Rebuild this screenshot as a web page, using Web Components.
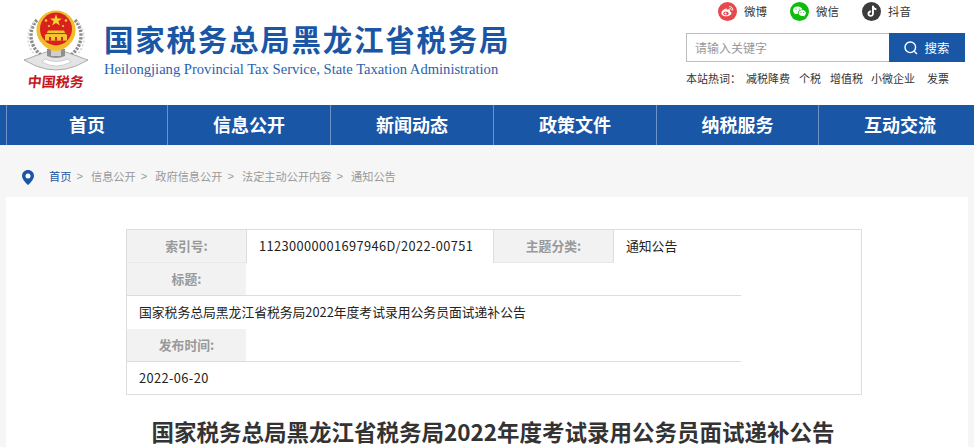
<!DOCTYPE html>
<html lang="zh">
<head>
<meta charset="utf-8">
<title>国家税务总局黑龙江省税务局</title>
<style>
  html, body { margin: 0; background: #f6f6f6; }
  body { font-family: "Noto Sans CJK SC", "Liberation Sans", sans-serif; height: 447px; overflow: hidden; }
</style>
</head>
<body>
<site-header></site-header>
<main-nav></main-nav>
<bread-crumb></bread-crumb>
<article-panel>
  <info-table>
    <span slot="index" style="letter-spacing:.4px">11230000001697946D/2022-00751</span>
    <span slot="topic">通知公告</span>
    <span slot="title">国家税务总局黑龙江省税务局2022年度考试录用公务员面试递补公告</span>
    <span slot="date" style="letter-spacing:.4px">2022-06-20</span>
  </info-table>
  <h1 slot="heading">国家税务总局黑龙江省税务局2022年度考试录用公务员面试递补公告</h1>
</article-panel>

<script>
const FONT = '"Noto Sans CJK SC", "Liberation Sans", sans-serif'

class TaxLogo extends HTMLElement {
  constructor() {
    super()
    this.attachShadow({ mode: 'open' }).innerHTML = `
    <style>
      :host { display: block; width: 64px; }
      svg { display: block; }
      .seal {
        display: block; height: 20px; margin-top: -2px; white-space: nowrap;
        color: #c4161c; font: bold 14px/20px ${FONT};
        text-align: center; transform: skewX(-6deg);
      }
    </style>
    <svg width="64" height="65" viewBox="0 0 64 65">
      <!-- wreath -->
      <g fill="none" stroke="#8c8c8c" stroke-width="3.4" stroke-dasharray="2.4 1.3">
        <path d="M13 12 C4 22 5 38 17 47"/>
        <path d="M51 12 C60 22 59 38 47 47"/>
      </g>
      <g fill="none" stroke="#d4d4d4" stroke-width="1.6" stroke-dasharray="2 2">
        <path d="M10 14 C1 24 2 40 14 50"/>
        <path d="M54 14 C63 24 62 40 50 50"/>
      </g>
      <!-- ribbon -->
      <path d="M0 52 L22 44 L42 44 L64 52 L52 58 Q32 66 12 58 Z" fill="#e4e4e4" stroke="#9a9a9a" stroke-width=".8"/>
      <path d="M18 54 Q32 62 47 54 L44 51 Q32 56 21 51 Z" fill="#fff" stroke="#aaa" stroke-width=".5"/>
      <path d="M23 41 h18 v7 q-9 4 -18 0 Z" fill="#8f8f8f"/>
      <rect x="27" y="39" width="10" height="9" fill="#cfcfcf"/>
      <!-- emblem -->
      <circle cx="32" cy="22" r="19.6" fill="#f1bd2c"/>
      <ellipse cx="32" cy="21" rx="16" ry="16.4" fill="#d9221f"/>
      <path d="M32 6.2 l1.5 4.3 h4.5 l-3.6 2.7 1.4 4.4 -3.8 -2.7 -3.8 2.7 1.4 -4.4 -3.6 -2.7 h4.5 Z" fill="#f7d22f"/>
      <g fill="#f7d22f"><circle cx="22" cy="12.5" r="1.3"/><circle cx="42" cy="12.5" r="1.3"/><circle cx="25" cy="18" r="1.1"/><circle cx="39" cy="18" r="1.1"/></g>
      <path d="M22 26 h20 l1.5 2 h-23 Z M24 22.5 h16 l1.2 2.4 h-18.4 Z" fill="#f3c52e"/>
      <rect x="21" y="28" width="22" height="4.6" fill="#f3c52e"/>
      <g fill="#d9221f"><rect x="25" y="29" width="2" height="3.6"/><rect x="31" y="29" width="2" height="3.6"/><rect x="37" y="29" width="2" height="3.6"/></g>
      <path d="M16 30 Q23 41 32 41.5 Q41 41 48 30 L45 37 Q38 43 32 43 Q26 43 19 37 Z" fill="#f1bd2c"/>
    </svg>
    <span class="seal">中国税务</span>`
  }
}

class SocialLink extends HTMLElement {
  constructor() {
    super()
    this.attachShadow({ mode: 'open' }).innerHTML = `
    <style>
      :host { display: flex; align-items: center; gap: 7px; font-size: 11.5px; line-height: 19px; color: #333; }
      ::slotted(svg) { display: block; }
    </style>
    <slot name="icon"></slot><slot></slot>`
  }
}

class SearchBox extends HTMLElement {
  constructor() {
    super()
    this.attachShadow({ mode: 'open' }).innerHTML = `
    <style>
      :host { display: flex; height: 29px; width: 279px; font-size: 12px; line-height: 27px; }
      .field { flex: 1; border: 1px solid #bdbdbd; border-right: 0; padding-left: 8px; color: #999; }
      .btn { width: 76px; background: #1a56a6; color: #fff; font-size: 12.5px; display: flex; align-items: center; justify-content: center; gap: 6px; box-sizing: border-box; }
      svg { display: block; }
    </style>
    <div class="field">请输入关键字</div>
    <div class="btn">
      <svg width="14" height="14" viewBox="0 0 14 14" fill="none" stroke="#fff" stroke-width="1.4"><circle cx="6.3" cy="6.3" r="5.3"/><path d="M10.2 10.2 L13 13"/></svg>
      <span>搜索</span>
    </div>`
  }
}

class HotWords extends HTMLElement {
  constructor() {
    super()
    this.attachShadow({ mode: 'open' }).innerHTML = `
    <style>
      :host { display: flex; font-size: 11px; line-height: 16px; color: #333; white-space: nowrap; }
      span { margin-right: 9px; }
      .lead { margin-right: 5px; width: 55px; }
      .tight { margin-right: 8px; }
      .far { margin-left: 3px; }
    </style>
    <span class="lead">本站热词：</span><span>减税降费</span><span>个税</span><span class="tight">增值税</span><span>小微企业</span><span class="far">发票</span>`
  }
}

class SiteHeader extends HTMLElement {
  constructor() {
    super()
    this.attachShadow({ mode: 'open' }).innerHTML = `
    <style>
      :host { display: flex; height: 105px; background: #fff; box-sizing: border-box; padding: 8px 9px 0 24px; overflow: hidden; }
      .brand { margin-left: 16px; color: #1a56a6; }
      .cn { font-size: 29.5px; font-weight: bold; letter-spacing: 1.75px; line-height: 44px; margin-top: 8px; white-space: nowrap; }
      .en { font: 14.6px/18px "Liberation Serif", serif; margin-top: 0; white-space: nowrap; color: #2b62ad; }
      .tools { margin-left: auto; margin-top: -6px; width: 279px; }
      .social { display: flex; padding-left: 32px; gap: 23px; height: 19px; margin-bottom: 12px; }
      hot-words { margin-top: 8px; }
    </style>
    <tax-logo></tax-logo>
    <div class="brand">
      <div class="cn">国家税务总局黑龙江省税务局</div>
      <div class="en">Heilongjiang Provincial Tax Service, State Taxation Administration</div>
    </div>
    <div class="tools">
      <div class="social">
        <social-link>
          <svg slot="icon" width="19" height="19" viewBox="0 0 19 19"><circle cx="9.5" cy="9.5" r="9.5" fill="#e8474c"/><path d="M8 6.6c-2.4.6-4.6 2.600-4.600 4.600 0 1.900 2.300 3.100 4.800 3.100 3 0 5.300-1.600 5.300-3.200 0-1-.9-1.500-1.600-1.700.3-.8.3-1.400-.1-1.800-.7-.6-2-.2-3.100.3.3-1.100.1-1.700-.7-1.300z" fill="#fff"/><ellipse cx="8" cy="11.400" rx="2.700" ry="1.900" fill="#e8474c"/><circle cx="7.600" cy="11.500" r="1" fill="#fff"/><path d="M11.500 4.600c2-.3 3.700 1.400 3.300 3.500M11.800 6.300c1-.2 1.700.6 1.500 1.600" fill="none" stroke="#fff" stroke-width=".9" stroke-linecap="round"/></svg>
          微博
        </social-link>
        <social-link>
          <svg slot="icon" width="19" height="19" viewBox="0 0 19 19"><circle cx="9.5" cy="9.5" r="9.5" fill="#0cbd0a"/><path d="M7.600 4.400c-2.600 0-4.600 1.700-4.600 3.800 0 1.200.7 2.300 1.700 3l-.4 1.400 1.600-.8c.6.2 1.100.3 1.700.3h.4c-.1-.3-.2-.6-.2-1 0-2 1.900-3.600 4.300-3.600h.3c-.4-1.800-2.300-3.100-4.500-3.100z" fill="#fff"/><path d="M16 11c0-1.700-1.700-3.100-3.700-3.100S8.600 9.300 8.600 11s1.700 3.100 3.700 3.100c.4 0 .9-.1 1.300-.2l1.300.7-.3-1.200c.8-.6 1.400-1.500 1.400-2.400z" fill="#fff"/><g fill="#0cbd0a"><circle cx="6" cy="7" r=".6"/><circle cx="9.200" cy="7" r=".6"/><circle cx="11" cy="10.400" r=".5"/><circle cx="13.600" cy="10.400" r=".5"/></g></svg>
          微信
        </social-link>
        <social-link>
          <svg slot="icon" width="19" height="19" viewBox="0 0 19 19"><circle cx="9.5" cy="9.5" r="9.5" fill="#3c3c3c"/><path d="M10 3.800h1.900c.1 1.500 1 2.400 2.500 2.500v1.900c-.9 0-1.800-.3-2.500-.8v4c0 2-1.500 3.300-3.200 3.300S5.500 13.400 5.500 11.700c0-1.900 1.700-3.400 3.600-3.100v2c-.9-.3-1.700.4-1.700 1.200 0 .7.600 1.300 1.300 1.300.8 0 1.300-.6 1.300-1.400z" fill="#fff"/></svg>
          抖音
        </social-link>
      </div>
      <search-box></search-box>
      <hot-words></hot-words>
    </div>`
  }
}

class MainNav extends HTMLElement {
  constructor() {
    super()
    const items = ['首页', '信息公开', '新闻动态', '政策文件', '纳税服务', '互动交流']
    this.attachShadow({ mode: 'open' }).innerHTML = `
    <style>
      :host { display: block; height: 40px; background: #1a56a6; padding-left: 6px; overflow: hidden; }
      ul { display: grid; grid-template-columns: 161px 163px 163px 163px 162px 163px; margin: 0; padding: 0; list-style: none; }
      li { height: 40px; line-height: 39px; border-left: 1px solid #6c92c6; color: #fff; font-size: 18px; font-weight: bold; text-align: center; }
    </style>
    <ul>${items.map(i => `<li>${i}</li>`).join('')}</ul>`
  }
}

class BreadCrumb extends HTMLElement {
  constructor() {
    super()
    const path = ['信息公开', '政府信息公开', '法定主动公开内容', '通知公告']
    this.attachShadow({ mode: 'open' }).innerHTML = `
    <style>
      :host { display: flex; align-items: center; height: 52px; padding: 9px 0 0 22px; box-sizing: border-box; font-size: 11.2px; color: #999; white-space: nowrap; }
      svg { display: block; margin: 4px 15px 0 0; }
      a { color: #1a56a6; }
      i { font-style: normal; font-family: "Liberation Sans", sans-serif; margin: 0 8px 0 5px; }
    </style>
    <svg width="12" height="15" viewBox="0 0 12 15"><path d="M6 0C2.700 0 0 2.600 0 5.900 0 9.800 6 15 6 15s6-5.200 6-9.100C12 2.600 9.300 0 6 0z" fill="#1a56a6"/><circle cx="6" cy="6" r="2.500" fill="#fff"/></svg>
    <a>首页</a><i>&gt;</i>${path.map((p, n) => p + (n < path.length - 1 ? '<i>&gt;</i>' : '')).join('')}`
  }
}

class InfoTable extends HTMLElement {
  constructor() {
    super()
    this.attachShadow({ mode: 'open' }).innerHTML = `
    <style>
      :host { display: block; width: 736px; height: 166px; box-sizing: border-box; border: 1px solid #ddd; margin-left: 120px; font-size: 12.8px; color: #222; background: #fff; }
      .row { display: flex; height: 33px; line-height: 32px; }
      .ruled { width: 614px; border-bottom: 1px solid #ddd; box-sizing: border-box; }
      .th { width: 119px; background: #f2f2f2; color: #999; font-weight: bold; text-align: center; flex: none; }
      .b { border-left: 1px solid #ddd; border-right: 1px solid #ddd; }
      .first { height: 32px; border-bottom: 1px solid #e8e8e8; }
      .td { padding-left: 12px; white-space: nowrap; }
      .wide { width: 234px; }
    </style>
    <div class="row">
      <div class="th first">索引号:</div>
      <div class="td wide" style="border-left:1px solid #ddd"><slot name="index"></slot></div>
      <div class="th first b">主题分类:</div>
      <div class="td"><slot name="topic"></slot></div>
    </div>
    <div class="row ruled"><div class="th">标题:</div></div>
    <div class="row"><div class="td"><slot name="title"></slot></div></div>
    <div class="row ruled"><div class="th">发布时间:</div></div>
    <div class="row"><div class="td"><slot name="date"></slot></div></div>`
  }
}

class ArticlePanel extends HTMLElement {
  constructor() {
    super()
    this.attachShadow({ mode: 'open' }).innerHTML = `
    <style>
      :host { display: block; margin: 0 6px; padding-top: 32px; background: #fff; height: 300px; box-sizing: border-box; }
      ::slotted(h1) { margin: 20px 0 0; padding-left: 12px; font-size: 22.5px; line-height: 32px; font-weight: bold; color: #333; text-align: center; white-space: nowrap; }
    </style>
    <slot></slot><slot name="heading"></slot>`
  }
}

customElements.define('tax-logo', TaxLogo)
customElements.define('social-link', SocialLink)
customElements.define('search-box', SearchBox)
customElements.define('hot-words', HotWords)
customElements.define('site-header', SiteHeader)
customElements.define('main-nav', MainNav)
customElements.define('bread-crumb', BreadCrumb)
customElements.define('info-table', InfoTable)
customElements.define('article-panel', ArticlePanel)
</script>
</body>
</html>
